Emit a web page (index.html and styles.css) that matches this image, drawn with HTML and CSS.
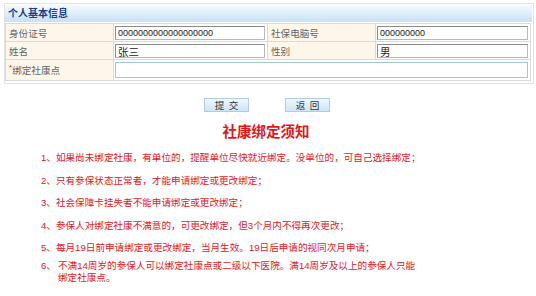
FILE: index.html
```html
<!DOCTYPE html>
<html lang="zh-CN">
<head>
    <meta charset="UTF-8">
    <title>社康绑定</title>
    <link rel="stylesheet" href="styles.css">
</head>
<body>
<div id="wrap">
    <div class="box">
        <div class="box-title">个人基本信息</div>
        <table class="info">
            <tr class="row">
                <td class="lbl">身份证号</td>
                <td class="val"><input type="text" class="ipt" value="0000000000000000000"></td>
                <td class="lbl">社保电脑号</td>
                <td class="val"><input type="text" class="ipt" value="000000000"></td>
            </tr>
            <tr class="row">
                <td class="lbl">姓名</td>
                <td class="val"><input type="text" class="ipt cn" value="张三"></td>
                <td class="lbl">性别</td>
                <td class="val"><input type="text" class="ipt cn" value="男"></td>
            </tr>
            <tr class="row row-last">
                <td class="lbl"><span class="star">*</span>绑定社康点</td>
                <td class="val" colspan="3"><input type="text" class="ipt ipt-wide"></td>
            </tr>
        </table>
    </div>
    <div class="btns">
        <a href="javascript:;" class="btn">提&nbsp;&nbsp;交</a>
        <a href="javascript:;" class="btn">返&nbsp;&nbsp;回</a>
    </div>
    <h2 class="notice-title">社康绑定须知</h2>
    <ul class="notice">
        <li>1、如果尚未绑定社康，有单位的，提醒单位尽快就近绑定。没单位的，可自己选择绑定；</li>
        <li>2、只有参保状态正常者，才能申请绑定或更改绑定；</li>
        <li>3、社会保障卡挂失者不能申请绑定或更改绑定；</li>
        <li>4、参保人对绑定社康不满意的，可更改绑定，但3个月内不得再次更改；</li>
        <li>5、每月19日前申请绑定或更改绑定，当月生效。19日后申请的视同次月申请；</li>
        <li class="last"><span class="no">6、</span><span class="txt">不满14周岁的参保人可以绑定社康点或二级以下医院。满14周岁及以上的参保人只能<br>绑定社康点。</span></li>
    </ul>
</div>
</body>
</html>
```

FILE: styles.css
```css
*{margin: 0;padding: 0;}
body{background: #fff;font-family: "Liberation Sans", "Noto Sans CJK SC", sans-serif;font-size: 9.6px;color: #555;}
a{text-decoration: none;}
#wrap{width: 536px;padding-top: 3px;}
.box{margin: 0 4px 0 4px;border: 1px #e2e2e2 solid;padding: 1px 1px 2px 0;width: 527px;}
.box-title{height: 17px;line-height: 17px;padding-left: 3px;font-weight: bold;font-size: 10px;color: #1d3f8f;background: linear-gradient(#f6fafe, #d9ecfa 60%, #c7e1f6);}
.info{width: 526px;border-collapse: collapse;margin-top: 1px;}
.info td{border: 1px #dadada solid;}
.row td{height: 17px;}
.row-last td{height: 20px;}
.lbl{width: 104px;background: #fcf7ea;padding-left: 3px;color: #666;}
.val{padding: 0 2px 0 1px;background: #fff;vertical-align: bottom;}
.info td:nth-child(2){width: 150px;}
.star{color: #e01010;font-size: 8px;vertical-align: top;}
.ipt{display: block;width: 100%;height: 14px;margin-bottom: 1px;box-sizing: border-box;border: 1px #b9b9b9 solid;border-top-color: #8d8d8d;border-left-color: #8d8d8d;padding-left: 2px;font-family: "Liberation Sans", "Noto Sans CJK SC", sans-serif;font-size: 9px;color: #222;outline: none;}
.ipt.cn{font-size: 10.5px;line-height: 12px;}
.ipt-wide{height: 16px;margin-bottom: 2px;border: 1px #a7c3dc solid;}
.btns{display: flex;justify-content: center;gap: 36px;margin-top: 14px;padding-right: 2px;}
.btn{display: block;width: 43px;height: 12px;line-height: 12px;text-align: center;border: 1px #b2cde3 solid;background: linear-gradient(#eef7fd, #cfe5f6);color: #333;font-size: 9.6px;font-family: "Noto Sans CJK SC", sans-serif;}
.notice-title{margin-top: 11px;text-align: center;font-size: 14.5px;line-height: 16px;font-weight: bold;color: #e5151a;font-family: "Noto Sans CJK SC", sans-serif;padding-right: 4px;}
.notice{list-style: none;padding-left: 41px;margin-top: 13px;color: #e8161d;font-family: "Liberation Sans", "Noto Sans CJK SC", sans-serif;}
.notice li{line-height: 12px;margin-bottom: 10.6px;}
.notice li.last{display: flex;margin-top: -5px;}
.notice .no{flex: none;width: 17px;}
```
